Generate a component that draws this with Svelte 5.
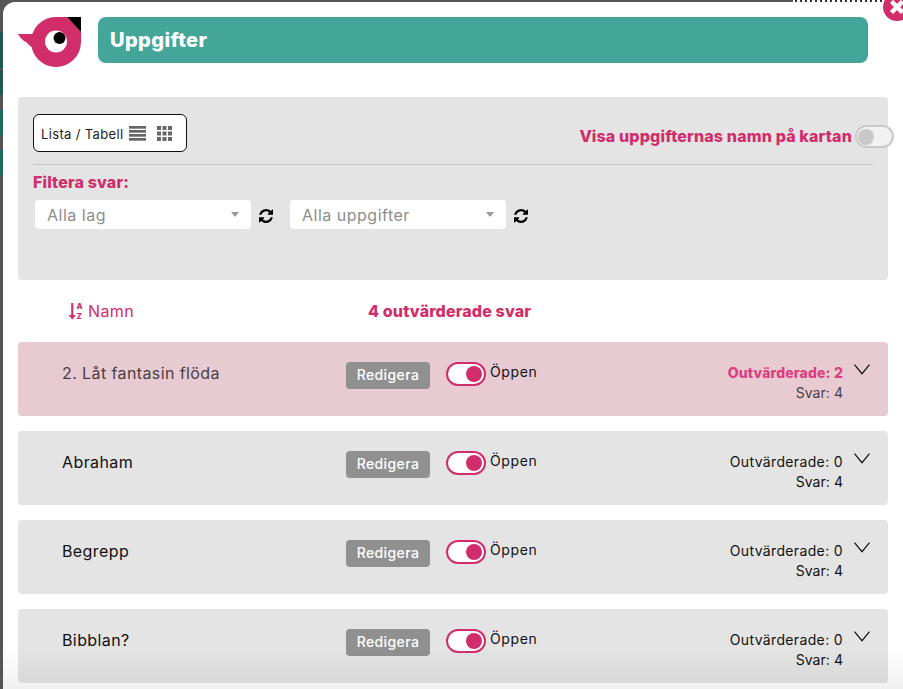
<script>
	const rows = [
		{ name: '2. Låt fantasin flöda', done: 2, answers: 4, active: true },
		{ name: 'Abraham', done: 0, answers: 4, active: false },
		{ name: 'Begrepp', done: 0, answers: 4, active: false },
		{ name: 'Bibblan?', done: 0, answers: 4, active: false }
	];
	const filters = ['Alla lag', 'Alla uppgifter'];
	const refresh =
		'M1511 928q0 5-1 7-64 268-268 434.5t-478 166.5q-146 0-282.5-55t-243.5-157l-129 129q-19 19-45 19t-45-19-19-45v-448q0-26 19-45t45-19h448q26 0 45 19t19 45-19 45l-137 137q71 66 161 102t187 36q134 0 250-65t186-179q11-17 53-117 8-23 30-23h192q13 0 22.5 9.5t9.5 22.5zm25-800v448q0 26-19 45t-45 19h-448q-26 0-45-19t-19-45 19-45l138-138q-148-137-349-137-134 0-250 65t-186 179q-11 17-53 117-8 23-30 23h-199q-13 0-22.5-9.5t-9.5-22.5v-7q65-268 270-434.5t480-166.5q146 0 284 55.5t245 156.5l130-129q19-19 45-19t45 19 19 45z';
</script>

<div class="page">
	<div class="modal">
		<header>
			<svg class="logo" width="63" height="50" viewBox="18 17 63 50">
				<path d="M18 34h16v14q-3-1-5-3-2-3-5-4-4-3-6-7z" fill="#d12d6b" />
				<path d="M55.5 17H67l14 15v10a25 25 0 1 1-25.500-25z" fill="#d12d6b" />
				<path d="M67 17h14v15z" fill="#000" />
				<circle cx="56" cy="41.500" r="11" fill="#fff" />
				<circle cx="59.500" cy="38" r="6" fill="#000" />
			</svg>
			<h1>Uppgifter</h1>
		</header>

		<section class="panel">
			<div class="top">
				<div class="view">
					<span>Lista / Tabell</span>
					<svg width="17" height="15" viewBox="0 0 17 15" fill="#666">
						<rect width="17" height="2.700" />
						<rect y="4" width="17" height="2.700" />
						<rect y="8" width="17" height="2.700" />
						<rect y="12" width="17" height="2.700" />
					</svg>
					<svg class="grid" width="15" height="15" viewBox="0 0 15 15" fill="#666">
						{#each [0, 5.500, 11] as y}
							{#each [0, 5.500, 11] as x}
								<rect {x} {y} width="4" height="4" />
							{/each}
						{/each}
					</svg>
				</div>
				<div class="names">
					<span>Visa uppgifternas namn på kartan</span>
					<span class="switch off"></span>
				</div>
			</div>
			<h2>Filtera svar:</h2>
			<div class="filters">
				{#each filters as f}
					<div class="select">
						<span>{f}</span>
						<i class="caret"></i>
					</div>
					<svg class="refresh" width="14" height="14" viewBox="0 0 1536 1536"><path d={refresh} /></svg>
				{/each}
			</div>
		</section>

		<div class="sort">
			<div class="sort-name">
				<svg width="16" height="18" viewBox="0 0 16 18">
					<path d="M3.200 1h2.100v12h2.700l-3.750 4.500L.5 13h2.700z" fill="#d12d6b" />
					<text x="8.500" y="7" class="az">A</text>
					<text x="8.500" y="17" class="az">Z</text>
				</svg>
				<span>Namn</span>
			</div>
			<strong>4 outvärderade svar</strong>
		</div>

		<div class="rows">
			{#each rows as row}
				<div class="row" class:active={row.active}>
					<div class="name">{row.name}</div>
					<div class="edit">Redigera</div>
					<span class="switch on"></span>
					<div class="state">Öppen</div>
					<div class="counts">
						<div class="done">Outvärderade: {row.done}</div>
						<div>Svar: {row.answers}</div>
					</div>
					<svg class="chevron" width="16" height="11" viewBox="0 0 16 11">
						<path d="M.5.700 8 9.700 15.500.700" fill="none" stroke="#111" stroke-width="1.200" />
					</svg>
				</div>
			{/each}
		</div>
		<div class="fade"></div>
	</div>

	<div class="close">
		<svg width="28" height="28" viewBox="0 0 28 28">
			<circle cx="14" cy="14" r="14" fill="#d12d6b" />
			<path d="M8.500 8.500l11 11M19.500 8.500l-11 11" stroke="#fff" stroke-width="4.500" />
		</svg>
	</div>
</div>

<style>
	:global(body) {
		margin: 0;
		font-family: Inter, 'Liberation Sans', sans-serif;
	}

	.page {
		position: relative;
		width: 903px;
		height: 689px;
		box-sizing: border-box;
		padding: 2px 0 0 3px;
		overflow: hidden;
		background:
			linear-gradient(90deg, #555 793px, transparent 793px) 0 0 / 100% 2px no-repeat,
			repeating-linear-gradient(90deg, #333 0 2px, #fff 2px 5px) 0 0 / 100% 2px no-repeat,
			linear-gradient(#555 0 32px, #1f5a52 32px 68px, #555 68px 70px, #1f5a52 70px 95px, #555 95px 110px, #1f6a5e 110px 135px, #555 135px 150px, #1f6a5e 150px 175px, #555 175px);
	}

	.modal {
		position: relative;
		height: 687px;
		box-sizing: border-box;
		padding: 15px 15px 0;
		background: #fff;
		border-radius: 12px 0 0 0;
		overflow: hidden;
	}

	header {
		display: flex;
		align-items: flex-start;
		gap: 17px;
	}

	.logo {
		flex: none;
	}

	h1 {
		flex: none;
		width: 770px;
		height: 46px;
		margin: 0;
		box-sizing: border-box;
		padding-left: 12px;
		background: #43a699;
		border-radius: 8px;
		color: #fff;
		font-size: 20px;
		font-weight: 800;
		letter-spacing: 0.4px;
		line-height: 47px;
	}

	.panel {
		height: 183px;
		box-sizing: border-box;
		margin-top: 30px;
		padding: 17px 15px 0;
		background: #e4e4e4;
		border-radius: 4px;
	}

	.top {
		display: flex;
		justify-content: space-between;
		align-items: flex-end;
		height: 51px;
		box-sizing: border-box;
		padding-bottom: 12px;
		border-bottom: 1px solid #c9c9c9;
	}

	.view {
		display: flex;
		align-items: center;
		width: 154px;
		height: 38px;
		box-sizing: border-box;
		padding-left: 7px;
		background: #fff;
		border: 1px solid #111;
		border-radius: 6px;
		color: #222;
		font-size: 13px;
		letter-spacing: 0.35px;
	}

	.view span {
		padding-top: 2px;
	}

	.view svg {
		margin-left: 6px;
	}

	.view .grid {
		margin-left: 11px;
	}

	.names {
		display: flex;
		align-items: center;
		gap: 3px;
		height: 24px;
		margin: 0 -21px 4px 0;
		color: #d12d6b;
		font-size: 16px;
		font-weight: 800;
		letter-spacing: 0.15px;
	}

	.switch {
		position: relative;
		display: inline-block;
		flex: none;
		width: 40px;
		height: 24px;
		box-sizing: border-box;
		background: #fff;
		border: 2px solid #d12d6b;
		border-radius: 12px;
	}

	.switch::after {
		content: '';
		position: absolute;
		top: 2px;
		right: 2px;
		width: 16px;
		height: 16px;
		background: #d12d6b;
		border-radius: 50%;
	}

	.switch.off {
		width: 39px;
		height: 23px;
		background: #f1f1f1;
		border-color: #c9c9c9;
	}

	.switch.off::after {
		right: auto;
		left: 1px;
		background: #c9c9c9;
	}

	h2 {
		margin: 8px 0 0;
		color: #d12d6b;
		font-size: 16px;
		font-weight: 800;
		letter-spacing: 0.15px;
		line-height: 18px;
	}

	.filters {
		display: flex;
		align-items: center;
		margin: 9px 0 0 2px;
	}

	.select {
		display: flex;
		align-items: center;
		justify-content: space-between;
		width: 216px;
		height: 29px;
		box-sizing: border-box;
		padding: 0 12px;
		background: #fff;
		border-radius: 4px;
		color: #8d8d8d;
		font-size: 16px;
		letter-spacing: 0.5px;
	}

	.caret {
		border: 4px solid transparent;
		border-top: 5px solid #999;
		border-bottom: 0;
	}

	.refresh {
		flex: none;
		margin: 2px 17px 0 8px;
	}

	.sort {
		display: flex;
		align-items: center;
		height: 62px;
		color: #d12d6b;
		font-size: 16px;
	}

	.sort-name {
		display: flex;
		align-items: center;
		gap: 4px;
		width: 300px;
		margin-left: 50px;
		letter-spacing: 0.4px;
	}

	.az {
		fill: #d12d6b;
		font-size: 8px;
		font-weight: 800;
	}

	.sort strong {
		font-weight: 800;
		font-size: 16px;
		letter-spacing: 0.15px;
	}

	.rows {
		display: flex;
		flex-direction: column;
		gap: 15px;
	}

	.row {
		display: flex;
		align-items: flex-start;
		flex: none;
		height: 74px;
		box-sizing: border-box;
		padding-top: 20px;
		background: #e4e4e4;
		border-radius: 4px;
		color: #111;
		font-size: 14px;
		letter-spacing: 0.05px;
	}

	.row.active {
		background: #e8cad2;
		color: #4a3d42;
	}

	.done {
		letter-spacing: 0.35px;
	}

	.row.active .done {
		color: #dc3f7f;
		font-weight: 800;
		letter-spacing: 0.15px;
	}

	.name {
		width: 284px;
		margin-left: 44px;
		font-size: 16px;
		letter-spacing: 0.4px;
		line-height: 22px;
	}

	.edit {
		width: 84px;
		height: 27px;
		background: #909090;
		border-radius: 4px;
		color: #fff;
		font-size: 14px;
		font-weight: 500;
		letter-spacing: 0.4px;
		line-height: 26px;
		text-align: center;
	}

	.row .switch {
		margin-left: 16px;
	}

	.state {
		flex: 1;
		margin: 0 0 0 4px;
		color: #111;
		letter-spacing: 0.6px;
		line-height: 20px;
	}

	.counts {
		padding-top: 1px;
		line-height: 20px;
		text-align: right;
	}

	.chevron {
		margin: 2px 18px 0 11px;
	}

	.fade {
		position: absolute;
		left: 0;
		right: 0;
		bottom: 0;
		height: 42px;
		background: linear-gradient(transparent, rgba(0, 0, 0, 0.06));
		pointer-events: none;
	}

	.close {
		position: absolute;
		top: -7px;
		right: -8px;
		line-height: 0;
	}
</style>
